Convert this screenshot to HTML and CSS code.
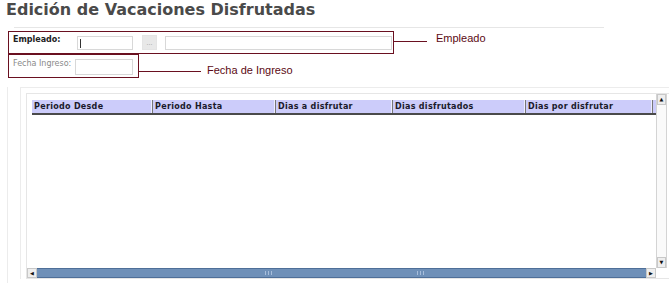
FILE: index.html
```html
<!DOCTYPE html>
<html lang="es">
<head>
    <meta charset="UTF-8">
    <title>Edición de Vacaciones Disfrutadas</title>
    <link rel="stylesheet" href="styles.css">
</head>
<body>

    <h1 class="title">Edición de Vacaciones Disfrutadas</h1>
    <div class="title-rule"></div>

    <!-- Empleado row with annotation -->
    <div class="annot-row row-empleado">
        <div class="annot-box box-empleado">
            <label class="lbl-strong">Empleado:</label>
            <div class="field field-code"><span class="caret"></span></div>
            <button class="btn-dots">...</button>
            <div class="field field-name"></div>
        </div>
        <div class="leader leader-empleado"></div>
        <span class="note">Empleado</span>
    </div>

    <!-- Fecha de ingreso row with annotation -->
    <div class="annot-row row-fecha">
        <div class="annot-box box-fecha">
            <label class="lbl-soft">Fecha Ingreso:</label>
            <div class="field field-date"></div>
        </div>
        <div class="leader leader-fecha"></div>
        <span class="note">Fecha de Ingreso</span>
    </div>

    <!-- Grid of periods -->
    <div class="outer">
        <div class="panel">
            <div class="grid">
                <div class="grid-body">
                    <div class="grid-head">
                        <div class="col c1">Periodo Desde</div>
                        <div class="col c2">Periodo Hasta</div>
                        <div class="col c3">Dias a disfrutar</div>
                        <div class="col c4">Dias disfrutados</div>
                        <div class="col c5">Dias por disfrutar</div>
                    </div>
                </div>
                <div class="vscroll">
                    <div class="sbtn">&#9650;</div>
                    <div class="vtrack"></div>
                    <div class="sbtn">&#9660;</div>
                </div>
                <div class="hscroll">
                    <div class="sbtn hbtn">&#9664;</div>
                    <div class="htrack">
                        <span class="grip g1"></span>
                        <span class="grip g2"></span>
                    </div>
                    <div class="sbtn hbtn">&#9654;</div>
                </div>
                <div class="corner"></div>
            </div>
        </div>
    </div>

</body>
</html>
```

FILE: styles.css
```css
body {
    margin: 0;
    padding: 0;
    background: #fff;
    font-family: 'DejaVu Sans', Verdana, sans-serif;
    overflow: hidden;
}

.title {
    margin: 1px 0 0 6px;
    font-size: 16px;
    line-height: 18px;
    font-weight: bold;
    color: #4a4a4a;
}

.title-rule {
    margin: 8px 0 0 14px;
    width: 590px;
    height: 1px;
    background: #e6e6e6;
}

.annot-row {
    display: flex;
    align-items: center;
    margin-left: 8px;
}

.row-empleado {
    margin-top: 3px;
}

.annot-box {
    box-sizing: border-box;
    border: 1px solid #6a1020;
    display: flex;
    align-items: center;
}

.box-empleado {
    width: 386px;
    height: 23px;
    padding-left: 4px;
}

.box-fecha {
    width: 131px;
    height: 24px;
    padding-left: 4px;
}

.leader {
    height: 0;
    border-top: 1px solid #6a1020;
}

.leader-empleado {
    width: 33px;
    margin-bottom: 2px;
}

.leader-fecha {
    width: 62px;
    margin-top: 10px;
}

.note {
    font-family: 'Liberation Sans', Arial, sans-serif;
    font-size: 11px;
    color: #5c0a14;
    margin-left: 9px;
}

.row-empleado .note {
    margin-top: -10px;
}

.row-fecha .note {
    margin-left: 6px;
    margin-top: 8px;
}

.lbl-strong {
    font-size: 8px;
    font-weight: bold;
    color: #222;
    width: 64px;
    margin-top: -7px;
}

.lbl-soft {
    font-size: 8px;
    color: #8a8a8a;
    width: 62px;
    margin-top: -6px;
}

.field {
    box-sizing: border-box;
    height: 14px;
    border: 1px solid #d8d8d8;
    background: #fff;
}

.field-code {
    width: 56px;
    padding: 2px 0 0 2px;
}

.caret {
    display: block;
    width: 1px;
    height: 9px;
    background: #333;
}

.btn-dots {
    box-sizing: border-box;
    width: 15px;
    height: 15px;
    margin-left: 9px;
    padding: 0;
    border: 1px solid #e4e4e4;
    background: #e8e8e8;
    color: #999;
    font-size: 7px;
    line-height: 10px;
}

.field-name {
    width: 227px;
    margin-left: 8px;
}

.field-date {
    width: 58px;
    height: 16px;
    margin-top: 1px;
}

.outer {
    margin: 3px 0 0 7px;
    border-left: 1px solid #ececec;
    height: 210px;
}

.panel {
    margin: 9px 0 0 12px;
    border-left: 1px solid #ececec;
    border-top: 1px solid #ececec;
    padding: 5px 0 0 5px;
}

.grid {
    box-sizing: border-box;
    width: 643px;
    height: 186px;
    border: 1px solid #e6e6e6;
    border-right: none;
    display: grid;
    grid-template-columns: 629px 11px;
    grid-template-rows: 174px 10px;
}

.grid-body {
    padding: 6px 0 0 5px;
}

.grid-head {
    display: flex;
    height: 13px;
    background: #ccccfa;
    border-bottom: 2px solid #4a4a4a;
    font-size: 8px;
    letter-spacing: 0.3px;
    font-weight: bold;
    color: #1a1a2a;
}

.col {
    box-sizing: border-box;
    padding: 2px 0 0 2px;
    border-right: 1px solid #777;
    box-shadow: inset -1px 0 0 #eef;
    white-space: nowrap;
    overflow: hidden;
}

.c1 { width: 121px; }
.c2 { width: 123px; }
.c3 { width: 117px; }
.c4 { width: 133px; }
.c5 { width: 127px; }

.vscroll {
    display: flex;
    flex-direction: column;
    border-left: 1px solid #d4d4d4;
    border-right: 1px solid #d4d4d4;
    background: #fafafa;
}

.sbtn {
    height: 9px;
    background: #eee;
    border: 1px solid #c8c8c8;
    font-size: 5px;
    line-height: 9px;
    text-align: center;
    color: #111;
}

.vtrack {
    flex: 1;
}

.hscroll {
    display: flex;
    background: #eee;
}

.hbtn {
    width: 8px;
    height: 8px;
    line-height: 8px;
}

.htrack {
    flex: 1;
    position: relative;
    background: #6f90b8;
    border-top: 1px solid #4f6f98;
    border-bottom: 1px solid #4f6f98;
}

.grip {
    position: absolute;
    top: 2px;
    width: 5px;
    height: 4px;
    border-left: 1px solid #a8bedb;
    border-right: 1px solid #a8bedb;
}

.grip::after {
    content: "";
    position: absolute;
    left: 2px;
    top: 0;
    width: 1px;
    height: 4px;
    background: #a8bedb;
}

.g1 { left: 228px; }
.g2 { left: 380px; }

.corner {
    background: #fff;
}
```
